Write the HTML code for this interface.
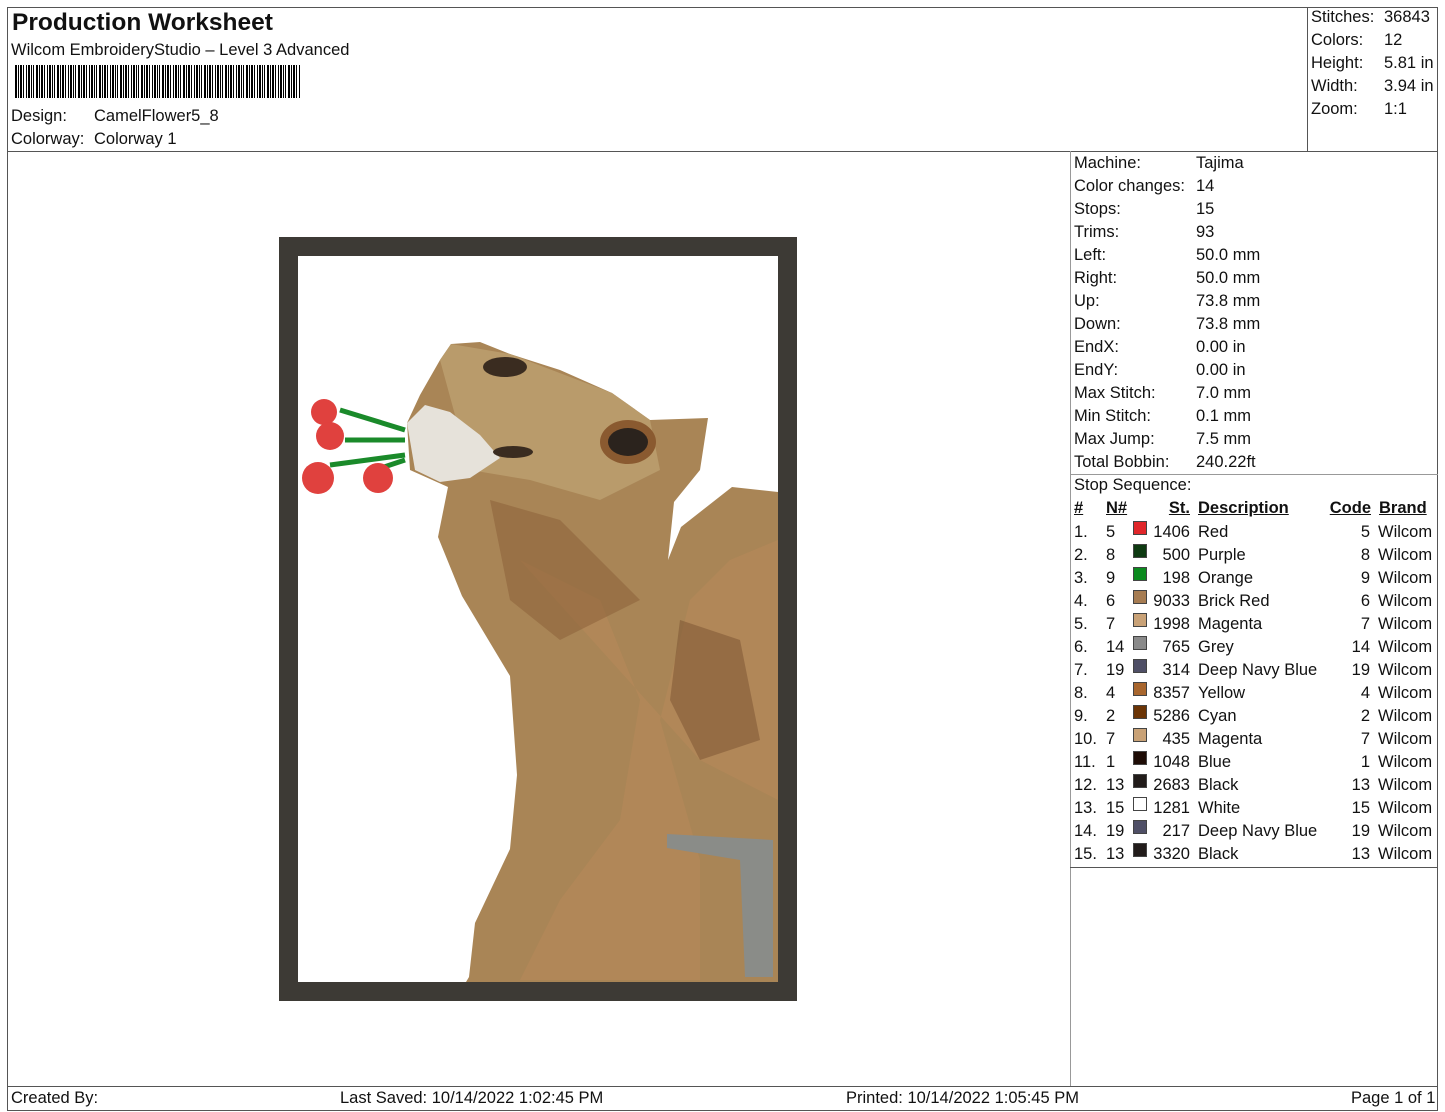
<!DOCTYPE html>
<html><head><meta charset="utf-8"><style>
*{margin:0;padding:0;box-sizing:border-box}
body{width:1445px;height:1112px;background:#fff;font-family:"Liberation Sans",Arial,sans-serif;color:#111;position:relative;overflow:hidden;font-size:16.5px}
.a{position:absolute;white-space:nowrap;line-height:18px}
.l{position:absolute;background:#555}
.sw{position:absolute;width:14px;height:14px;border:1px solid #444}
.r{text-align:right}
u{text-decoration:underline}
</style></head><body>
<div class="l" style="left:7px;top:7px;width:1431px;height:1px"></div>
<div class="l" style="left:7px;top:7px;width:1px;height:1104px"></div>
<div class="l" style="left:1437px;top:7px;width:1px;height:1104px"></div>
<div class="l" style="left:7px;top:1110px;width:1431px;height:1px"></div>
<div class="l" style="left:7px;top:151px;width:1431px;height:1px"></div>
<div class="l" style="left:1307px;top:7px;width:1px;height:145px"></div>
<div class="l" style="left:1070px;top:151px;width:1px;height:936px;background:#999"></div>
<div class="l" style="left:1070px;top:474px;width:368px;height:1px;background:#999"></div>
<div class="l" style="left:1070px;top:867px;width:368px;height:1px"></div>
<div class="l" style="left:7px;top:1086px;width:1431px;height:1px"></div>

<div class="a" style="left:12px;top:9px;font-size:24.5px;font-weight:bold;line-height:28px">Production Worksheet</div>
<div class="a" style="left:11px;top:41px">Wilcom EmbroideryStudio – Level 3 Advanced</div>
<div style="position:absolute;left:15px;top:65px;width:286px;height:33px;background:repeating-linear-gradient(90deg,#000 0 2px,#fff 2px 3px,#000 3px 4px,#fff 4px 5px,#000 5px 7px,#fff 7px 8px,#000 8px 9px,#fff 9px 11px,#000 11px 12px,#fff 12px 13px,#000 13px 15px,#fff 15px 16px,#000 16px 17px,#fff 17px 18px,#000 18px 19px,#fff 19px 21px)"></div>
<div class="a" style="left:11px;top:107px">Design:</div><div class="a" style="left:94px;top:107px">CamelFlower5_8</div>
<div class="a" style="left:11px;top:130px">Colorway:</div><div class="a" style="left:94px;top:130px">Colorway 1</div>

<div class="a" style="left:1311px;top:8px">Stitches:</div><div class="a" style="left:1384px;top:8px">36843</div>
<div class="a" style="left:1311px;top:31px">Colors:</div><div class="a" style="left:1384px;top:31px">12</div>
<div class="a" style="left:1311px;top:54px">Height:</div><div class="a" style="left:1384px;top:54px">5.81 in</div>
<div class="a" style="left:1311px;top:77px">Width:</div><div class="a" style="left:1384px;top:77px">3.94 in</div>
<div class="a" style="left:1311px;top:100px">Zoom:</div><div class="a" style="left:1384px;top:100px">1:1</div>

<div class="a" style="left:1074px;top:152px;line-height:23px">Machine:<br>Color changes:<br>Stops:<br>Trims:<br>Left:<br>Right:<br>Up:<br>Down:<br>EndX:<br>EndY:<br>Max Stitch:<br>Min Stitch:<br>Max Jump:<br>Total Bobbin:<br>Stop Sequence:</div>
<div class="a" style="left:1196px;top:152px;line-height:23px">Tajima<br>14<br>15<br>93<br>50.0 mm<br>50.0 mm<br>73.8 mm<br>73.8 mm<br>0.00 in<br>0.00 in<br>7.0 mm<br>0.1 mm<br>7.5 mm<br>240.22ft</div>

<div class="a" style="left:1074px;top:499px;font-weight:bold"><u>#</u></div>
<div class="a" style="left:1106px;top:499px;font-weight:bold"><u>N#</u></div>
<div class="a r" style="left:1140px;width:50px;top:499px;font-weight:bold"><u>St.</u></div>
<div class="a" style="left:1198px;top:499px;font-weight:bold"><u>Description</u></div>
<div class="a r" style="left:1310px;width:61px;top:499px;font-weight:bold"><u>Code</u></div>
<div class="a" style="left:1379px;top:499px;font-weight:bold"><u>Brand</u></div>

<div class="a" style="left:1074px;top:521px;line-height:23px">1.<br>2.<br>3.<br>4.<br>5.<br>6.<br>7.<br>8.<br>9.<br>10.<br>11.<br>12.<br>13.<br>14.<br>15.</div>
<div class="a" style="left:1106px;top:521px;line-height:23px">5<br>8<br>9<br>6<br>7<br>14<br>19<br>4<br>2<br>7<br>1<br>13<br>15<br>19<br>13</div>
<div class="a r" style="left:1140px;width:50px;top:521px;line-height:23px">1406<br>500<br>198<br>9033<br>1998<br>765<br>314<br>8357<br>5286<br>435<br>1048<br>2683<br>1281<br>217<br>3320</div>
<div class="a" style="left:1198px;top:521px;line-height:23px">Red<br>Purple<br>Orange<br>Brick Red<br>Magenta<br>Grey<br>Deep Navy Blue<br>Yellow<br>Cyan<br>Magenta<br>Blue<br>Black<br>White<br>Deep Navy Blue<br>Black</div>
<div class="a r" style="left:1320px;width:50px;top:521px;line-height:23px">5<br>8<br>9<br>6<br>7<br>14<br>19<br>4<br>2<br>7<br>1<br>13<br>15<br>19<br>13</div>
<div class="a" style="left:1378px;top:521px;line-height:23px">Wilcom<br>Wilcom<br>Wilcom<br>Wilcom<br>Wilcom<br>Wilcom<br>Wilcom<br>Wilcom<br>Wilcom<br>Wilcom<br>Wilcom<br>Wilcom<br>Wilcom<br>Wilcom<br>Wilcom</div>
<div class="sw" style="left:1133px;top:521px;background:#e0262a"></div>
<div class="sw" style="left:1133px;top:544px;background:#0e3a12"></div>
<div class="sw" style="left:1133px;top:567px;background:#0b8a1e"></div>
<div class="sw" style="left:1133px;top:590px;background:#a67c52"></div>
<div class="sw" style="left:1133px;top:613px;background:#c9a277"></div>
<div class="sw" style="left:1133px;top:636px;background:#8a8a8a"></div>
<div class="sw" style="left:1133px;top:659px;background:#4f4f66"></div>
<div class="sw" style="left:1133px;top:682px;background:#a8662e"></div>
<div class="sw" style="left:1133px;top:705px;background:#6b3406"></div>
<div class="sw" style="left:1133px;top:728px;background:#c9a277"></div>
<div class="sw" style="left:1133px;top:751px;background:#1e0c06"></div>
<div class="sw" style="left:1133px;top:774px;background:#221c1a"></div>
<div class="sw" style="left:1133px;top:797px;background:#fff"></div>
<div class="sw" style="left:1133px;top:820px;background:#4f4f66"></div>
<div class="sw" style="left:1133px;top:843px;background:#221c1a"></div>

<div class="a" style="left:11px;top:1089px">Created By:</div>
<div class="a" style="left:340px;top:1089px">Last Saved: 10/14/2022 1:02:45 PM</div>
<div class="a" style="left:846px;top:1089px">Printed: 10/14/2022 1:05:45 PM</div>
<div class="a" style="left:1351px;top:1089px">Page 1 of 1</div>

<svg style="position:absolute;left:0;top:0" width="1445" height="1112">
<rect x="279" y="237" width="518" height="764" fill="#3d3a35"/>
<rect x="298" y="256" width="480" height="726" fill="#fff"/>
<path d="M407,423 L420,395 L440,360 L451,344 L480,342 L510,354 L560,370 L612,393 L650,420 L708,418 L700,470 L674,502 L668,560 L681,527 L732,487 L778,492 L778,982 L466,982 L469,977 L475,923 L510,849 L517,775 L510,676 L462,596 L438,537 L448,487 L410,470 Z" fill="#a98556"/>
<path d="M440,360 L451,344 L510,354 L612,393 L650,420 L660,470 L600,500 L530,480 L470,470 Z" fill="#b99b6b"/>
<path d="M520,560 L600,600 L640,700 L620,820 L560,900 L520,980 L700,980 L700,860 L660,720 L690,600 L730,560 L778,540 L778,800 L700,760 Z" fill="#b8895a" opacity=".6"/>
<path d="M490,500 L560,520 L640,600 L560,640 L510,600 Z" fill="#8a5e35" opacity=".5"/>
<path d="M680,620 L740,640 L760,740 L700,760 L670,700 Z" fill="#7a5230" opacity=".5"/>
<path d="M407,423 L425,405 L450,412 L480,435 L500,458 L470,478 L440,482 L415,470 Z" fill="#e6e2da"/>
<ellipse cx="628" cy="442" rx="28" ry="22" fill="#8a5a30"/>
<ellipse cx="628" cy="442" rx="20" ry="14" fill="#2b231d"/>
<ellipse cx="505" cy="367" rx="22" ry="10" fill="#3a2c20"/>
<ellipse cx="513" cy="452" rx="20" ry="6" fill="#3a2c20"/>
<path d="M667,834 L773,840 L773,977 L745,977 L740,860 L667,848 Z" fill="#8a8c88"/>
<path d="M340,410 L405,430 M345,440 L405,440 M330,465 L405,455 M375,470 L405,460" stroke="#1a8a2a" stroke-width="5"/>
<circle cx="324" cy="412" r="13" fill="#e0413e"/>
<circle cx="330" cy="436" r="14" fill="#e0413e"/>
<circle cx="318" cy="478" r="16" fill="#e0413e"/>
<circle cx="378" cy="478" r="15" fill="#e0413e"/>
</svg>
</body></html>
